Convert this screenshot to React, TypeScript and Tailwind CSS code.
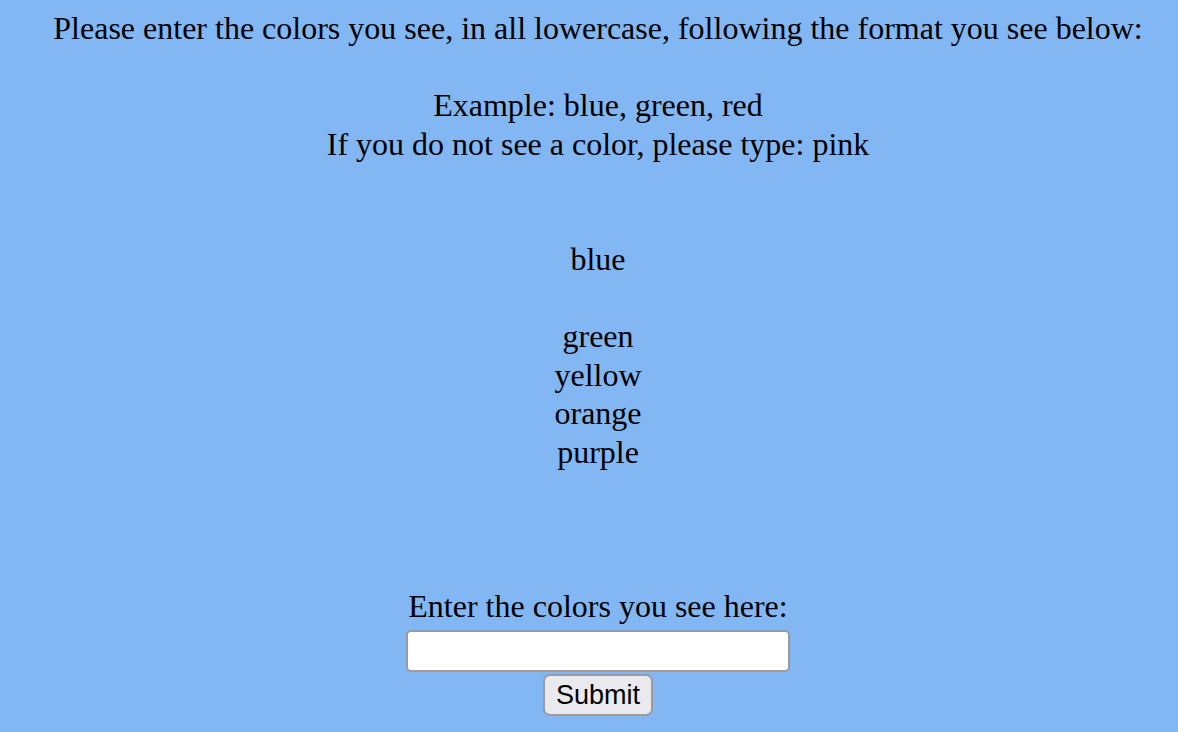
import { useState } from 'react';

const colors = ['green', 'yellow', 'orange', 'purple'];

const Blank = () => <div className="h-[38.5px]" />;

export default function App() {
  const [value, setValue] = useState('');

  return (
    <div className="min-h-screen w-full bg-[#82b7f4] text-black font-['Liberation_Serif','Times_New_Roman',serif] text-[32px] leading-[38.5px] text-center pt-[9px] pl-[18px]">
      <div>Please enter the colors you see, in all lowercase, following the format you see below:</div>
      <Blank />
      <div>Example: blue, green, red</div>
      <div>If you do not see a color, please type: pink</div>
      <Blank />
      <Blank />
      <div>blue</div>
      <Blank />
      {colors.map((c) => (
        <div key={c}>{c}</div>
      ))}
      <Blank />
      <Blank />
      <Blank />
      <form
        className="flex flex-col items-center"
        onSubmit={(e) => e.preventDefault()}
      >
        <label htmlFor="colors">Enter the colors you see here:</label>
        <input
          id="colors"
          type="text"
          value={value}
          onChange={(e) => setValue(e.target.value)}
          className="mt-[5px] w-[384px] h-[42px] bg-white border-2 border-[#9a9aa3] rounded-[5px] px-2 text-[26px] font-['Liberation_Sans',Arial,sans-serif]"
        />
        <button
          type="submit"
          className="mt-[2px] h-[42px] w-[110px] bg-[#e9e9ee] border-2 border-[#9a9aa3] rounded-[7px] text-[27px] leading-none font-['Liberation_Sans',Arial,sans-serif]"
        >
          Submit
        </button>
      </form>
    </div>
  );
}
